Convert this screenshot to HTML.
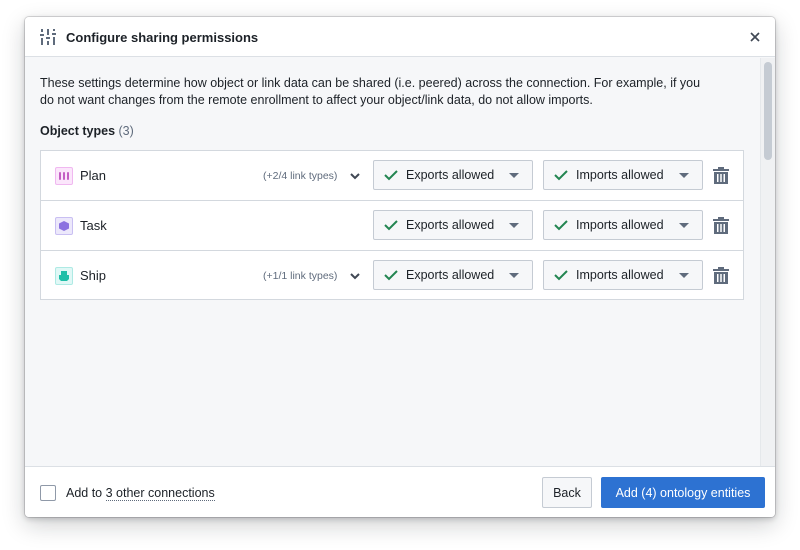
<!DOCTYPE html>
<html><head><style>
*{box-sizing:border-box;margin:0;padding:0}
body{width:800px;height:550px;background:#fff;font-family:"Liberation Sans",sans-serif;color:#1c2127;position:relative;overflow:hidden}
.dlg{position:absolute;left:25px;top:17px;width:750px;height:500px;background:#f6f7f9;border-radius:4px;box-shadow:0 0 0 1px rgba(17,20,24,.15),0 2px 6px rgba(17,20,24,.2),0 8px 24px rgba(17,20,24,.2);overflow:hidden}
.hd{position:absolute;left:0;top:0;width:750px;height:40px;background:#fff;border-bottom:1px solid #dce0e5}
.hd .t{position:absolute;left:41px;top:13px;font-size:13px;font-weight:bold;color:#1c2127}
.body{position:absolute;left:15px;top:58px;font-size:12.5px;line-height:17px;width:690px;color:#1c2127}
.sb{position:absolute;left:735px;top:41px;width:15px;height:408px;background:#f0f1f3;border-left:1px solid #e5e8eb}
.sb div{position:absolute;left:3px;top:4px;width:8px;height:98px;background:#c5cbd3;border-radius:4px}
.tbl{position:absolute;left:15px;top:133px;width:704px;height:150px;background:#fff;border:1px solid #d3d8de}
.row{position:relative;height:50px;border-bottom:1px solid #d3d8de}
.row:last-child{border-bottom:none}
.ic{position:absolute;left:14px;top:16px;width:18px;height:18px;border-radius:2px}
.nm{position:absolute;left:39px;top:17px;font-size:13px}
.lk{position:absolute;left:222px;top:19px;font-size:10.5px;color:#5f6b7c}
.chev{position:absolute;left:308px;top:19px}
.btn{position:absolute;top:9px;width:160px;height:30px;background:#f6f7f9;border:1px solid #c5cbd3;border-radius:2px;font-size:12.5px;color:#1c2127}
.btn svg.ck{position:absolute;left:10px;top:8px}
.btn span{position:absolute;left:32px;top:7px}
.btn .car{position:absolute;right:13px;top:12px;width:0;height:0;border-left:5px solid transparent;border-right:5px solid transparent;border-top:5px solid #5f6b7c}
.trash{position:absolute;left:672px;top:16px}
.ft{position:absolute;left:0;top:449px;width:750px;height:51px;background:#fff;border-top:1px solid #dce0e5}
.cb{position:absolute;left:15px;top:18px;width:16px;height:16px;border:1px solid #8f99a8;border-radius:2px;background:#fff}
.ftl{position:absolute;left:41px;top:19px;font-size:12.5px}
.ftl u{text-decoration:none;border-bottom:1px dotted #5f6b7c}
.back{position:absolute;left:517px;top:10px;width:50px;height:31px;border:1px solid #c5cbd3;background:#f6f7f9;border-radius:2px;font-size:12.5px;text-align:center;line-height:30px}
.add{position:absolute;left:576px;top:10px;width:164px;height:31px;background:#2d72d2;border-radius:2px;color:#fff;font-size:12.5px;text-align:center;line-height:32px}
</style></head><body>
<div class="dlg">
 <div class="hd">
  <svg style="position:absolute;left:15px;top:12px" width="16" height="16" viewBox="0 0 16 16" fill="#5f6b7c"><rect x="1" y="0" width="2" height="3"/><rect x="0" y="5" width="4" height="2"/><rect x="1" y="9" width="2" height="7"/><rect x="7" y="0" width="2" height="6"/><rect x="6" y="8" width="4" height="2"/><rect x="7" y="12" width="2" height="4"/><rect x="13" y="0" width="2" height="2"/><rect x="12" y="4" width="4" height="2"/><rect x="13" y="8" width="2" height="8"/></svg>
  <div class="t">Configure sharing permissions</div>
  <svg style="position:absolute;left:725px;top:15px" width="10" height="10" viewBox="0 0 10 10"><path d="M1 1L9 9M9 1L1 9" stroke="#404854" stroke-width="1.7"/></svg>
 </div>
 <div class="body">These settings determine how object or link data can be shared (i.e. peered) across the connection. For example, if you<br>do not want changes from the remote enrollment to affect your object/link data, do not allow imports.
 <div style="margin-top:14px;font-weight:bold">Object types <span style="font-weight:normal;color:#5f6b7c">(3)</span></div></div>
 <div class="sb"><div></div></div>
 <div class="tbl">
  <div class="row">
   <div class="ic" style="background:#fbe6fb;border:1px solid #f0b8f0"><svg width="16" height="16" viewBox="0 0 16 16" fill="#c45fc4"><rect x="3" y="4" width="2" height="8" rx="1"/><rect x="7" y="4" width="2" height="8" rx="1"/><rect x="11" y="4" width="2" height="8" rx="1"/></svg></div>
   <div class="nm">Plan</div><div class="lk">(+2/4 link types)</div>
   <svg class="chev" width="12" height="12" viewBox="0 0 12 12"><path d="M2 4l4 4 4-4" stroke="#404854" stroke-width="2" fill="none"/></svg>
   <div class="btn" style="left:332px"><svg class="ck" width="14" height="12" viewBox="0 0 14 12"><path d="M1 6l4 4 8-8" stroke="#238551" stroke-width="2" fill="none"/></svg><span>Exports allowed</span><div class="car"></div></div>
   <div class="btn" style="left:502px"><svg class="ck" width="14" height="12" viewBox="0 0 14 12"><path d="M1 6l4 4 8-8" stroke="#238551" stroke-width="2" fill="none"/></svg><span>Imports allowed</span><div class="car"></div></div>
   <svg class="trash" width="16" height="17" viewBox="0 0 16 17" fill="#5f6b7c"><rect x="5" y="0" width="6" height="2"/><rect x="0" y="2" width="16" height="2"/><path d="M1 5h14v12H1z M4 7v8h1.5V7z M7.25 7v8h1.5V7z M10.5 7v8H12V7z" fill-rule="evenodd"/></svg>
  </div>
  <div class="row">
   <div class="ic" style="background:#ece8fb;border:1px solid #c9bff2"><svg width="16" height="16" viewBox="0 0 16 16" fill="#8b72e0"><path d="M8 3l5 2.5v5L8 13 3 10.5v-5z"/></svg></div>
   <div class="nm">Task</div>
   <div class="btn" style="left:332px"><svg class="ck" width="14" height="12" viewBox="0 0 14 12"><path d="M1 6l4 4 8-8" stroke="#238551" stroke-width="2" fill="none"/></svg><span>Exports allowed</span><div class="car"></div></div>
   <div class="btn" style="left:502px"><svg class="ck" width="14" height="12" viewBox="0 0 14 12"><path d="M1 6l4 4 8-8" stroke="#238551" stroke-width="2" fill="none"/></svg><span>Imports allowed</span><div class="car"></div></div>
   <svg class="trash" width="16" height="17" viewBox="0 0 16 17" fill="#5f6b7c"><rect x="5" y="0" width="6" height="2"/><rect x="0" y="2" width="16" height="2"/><path d="M1 5h14v12H1z M4 7v8h1.5V7z M7.25 7v8h1.5V7z M10.5 7v8H12V7z" fill-rule="evenodd"/></svg>
  </div>
  <div class="row">
   <div class="ic" style="background:#e0f8f6;border:1px solid #aeeae4"><svg width="16" height="16" viewBox="0 0 16 16" fill="#1fbfa8"><path d="M5 3h6v4h2v4l-2 2H5l-2-2V7h2z"/></svg></div>
   <div class="nm">Ship</div><div class="lk">(+1/1 link types)</div>
   <svg class="chev" width="12" height="12" viewBox="0 0 12 12"><path d="M2 4l4 4 4-4" stroke="#404854" stroke-width="2" fill="none"/></svg>
   <div class="btn" style="left:332px"><svg class="ck" width="14" height="12" viewBox="0 0 14 12"><path d="M1 6l4 4 8-8" stroke="#238551" stroke-width="2" fill="none"/></svg><span>Exports allowed</span><div class="car"></div></div>
   <div class="btn" style="left:502px"><svg class="ck" width="14" height="12" viewBox="0 0 14 12"><path d="M1 6l4 4 8-8" stroke="#238551" stroke-width="2" fill="none"/></svg><span>Imports allowed</span><div class="car"></div></div>
   <svg class="trash" width="16" height="17" viewBox="0 0 16 17" fill="#5f6b7c"><rect x="5" y="0" width="6" height="2"/><rect x="0" y="2" width="16" height="2"/><path d="M1 5h14v12H1z M4 7v8h1.5V7z M7.25 7v8h1.5V7z M10.5 7v8H12V7z" fill-rule="evenodd"/></svg>
  </div>
 </div>
 <div class="ft">
  <div class="cb"></div>
  <div class="ftl">Add to <u>3 other connections</u></div>
  <div class="back">Back</div>
  <div class="add">Add (4) ontology entities</div>
 </div>
</div>
</body></html>
